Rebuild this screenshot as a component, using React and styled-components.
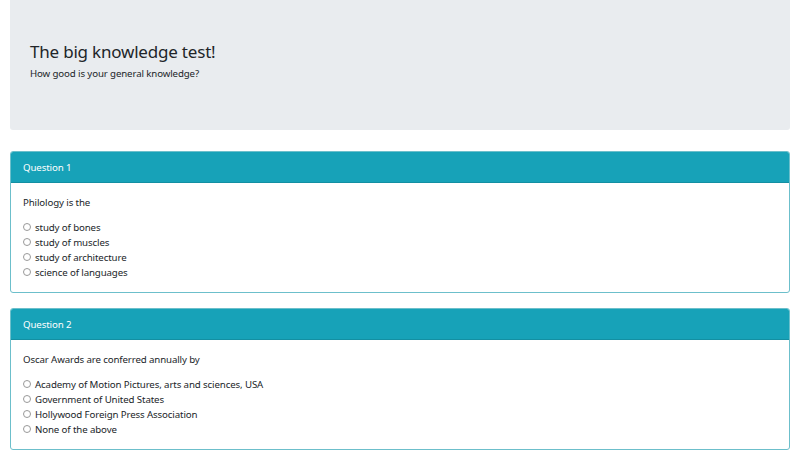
import React from "react";
import styled, { createGlobalStyle } from "styled-components";

const Global = createGlobalStyle`
  html, body { margin: 0; padding: 0; background: #fff; }
  body {
    font-family: "Noto Sans", "Open Sans", "Liberation Sans", sans-serif;
    font-size: 9.7px;
    letter-spacing: -0.12px;
    line-height: 15px;
    color: #212529;
  }
  * { box-sizing: border-box; }
`;

const Container = styled.div`
  padding: 0 10px;
`;

const Jumbotron = styled.header`
  background: #e9ecef;
  border-radius: 0 0 3px 3px;
  height: 130px;
  padding: 41.7px 20px 0 20px;
  margin-bottom: 21px;
`;

const Title = styled.h1`
  margin: 0 0 4.7px 0;
  font-size: 17px;
  line-height: 20px;
  letter-spacing: -0.2px;
  font-weight: 400;
`;

const Lead = styled.p`
  margin: 0;
`;

const Card = styled.section`
  border: 1px solid #6cbfcb;
  border-radius: 3px;
  margin-bottom: 15px;
  overflow: hidden;
  background: #fff;
`;

const CardHeader = styled.div`
  background: #17a2b8;
  color: #fff;
  margin: -1px -1px 0 -1px;
  padding: 9px 13px 7px 13px;
  border-bottom: 1px solid #138fa2;
`;

const CardBody = styled.div`
  padding: 12px 12px 12px 12px;
`;

const QuestionText = styled.p`
  margin: 0 0 10px 0;
`;

const Option = styled.label`
  display: flex;
  align-items: center;
  gap: 4px;
  height: 15px;
`;

const Radio = styled.input.attrs({ type: "radio" })`
  appearance: none;
  -webkit-appearance: none;
  margin: -2px 0 0 0;
  width: 8px;
  height: 8px;
  border: 1px solid #999;
  border-radius: 50%;
  background: #fff;
  flex: none;
`;

const questions = [
  {
    title: "Question 1",
    text: "Philology is the",
    options: [
      "study of bones",
      "study of muscles",
      "study of architecture",
      "science of languages",
    ],
  },
  {
    title: "Question 2",
    text: "Oscar Awards are conferred annually by",
    options: [
      "Academy of Motion Pictures, arts and sciences, USA",
      "Government of United States",
      "Hollywood Foreign Press Association",
      "None of the above",
    ],
  },
];

export default function App() {
  return (
    <>
      <Global />
      <Container>
        <Jumbotron>
          <Title>The big knowledge test!</Title>
          <Lead>How good is your general knowledge?</Lead>
        </Jumbotron>
        {questions.map((q, qi) => (
          <Card key={qi}>
            <CardHeader>{q.title}</CardHeader>
            <CardBody>
              <QuestionText>{q.text}</QuestionText>
              {q.options.map((o, oi) => (
                <Option key={oi}>
                  <Radio name={`q${qi}`} />
                  {o}
                </Option>
              ))}
            </CardBody>
          </Card>
        ))}
      </Container>
    </>
  );
}
